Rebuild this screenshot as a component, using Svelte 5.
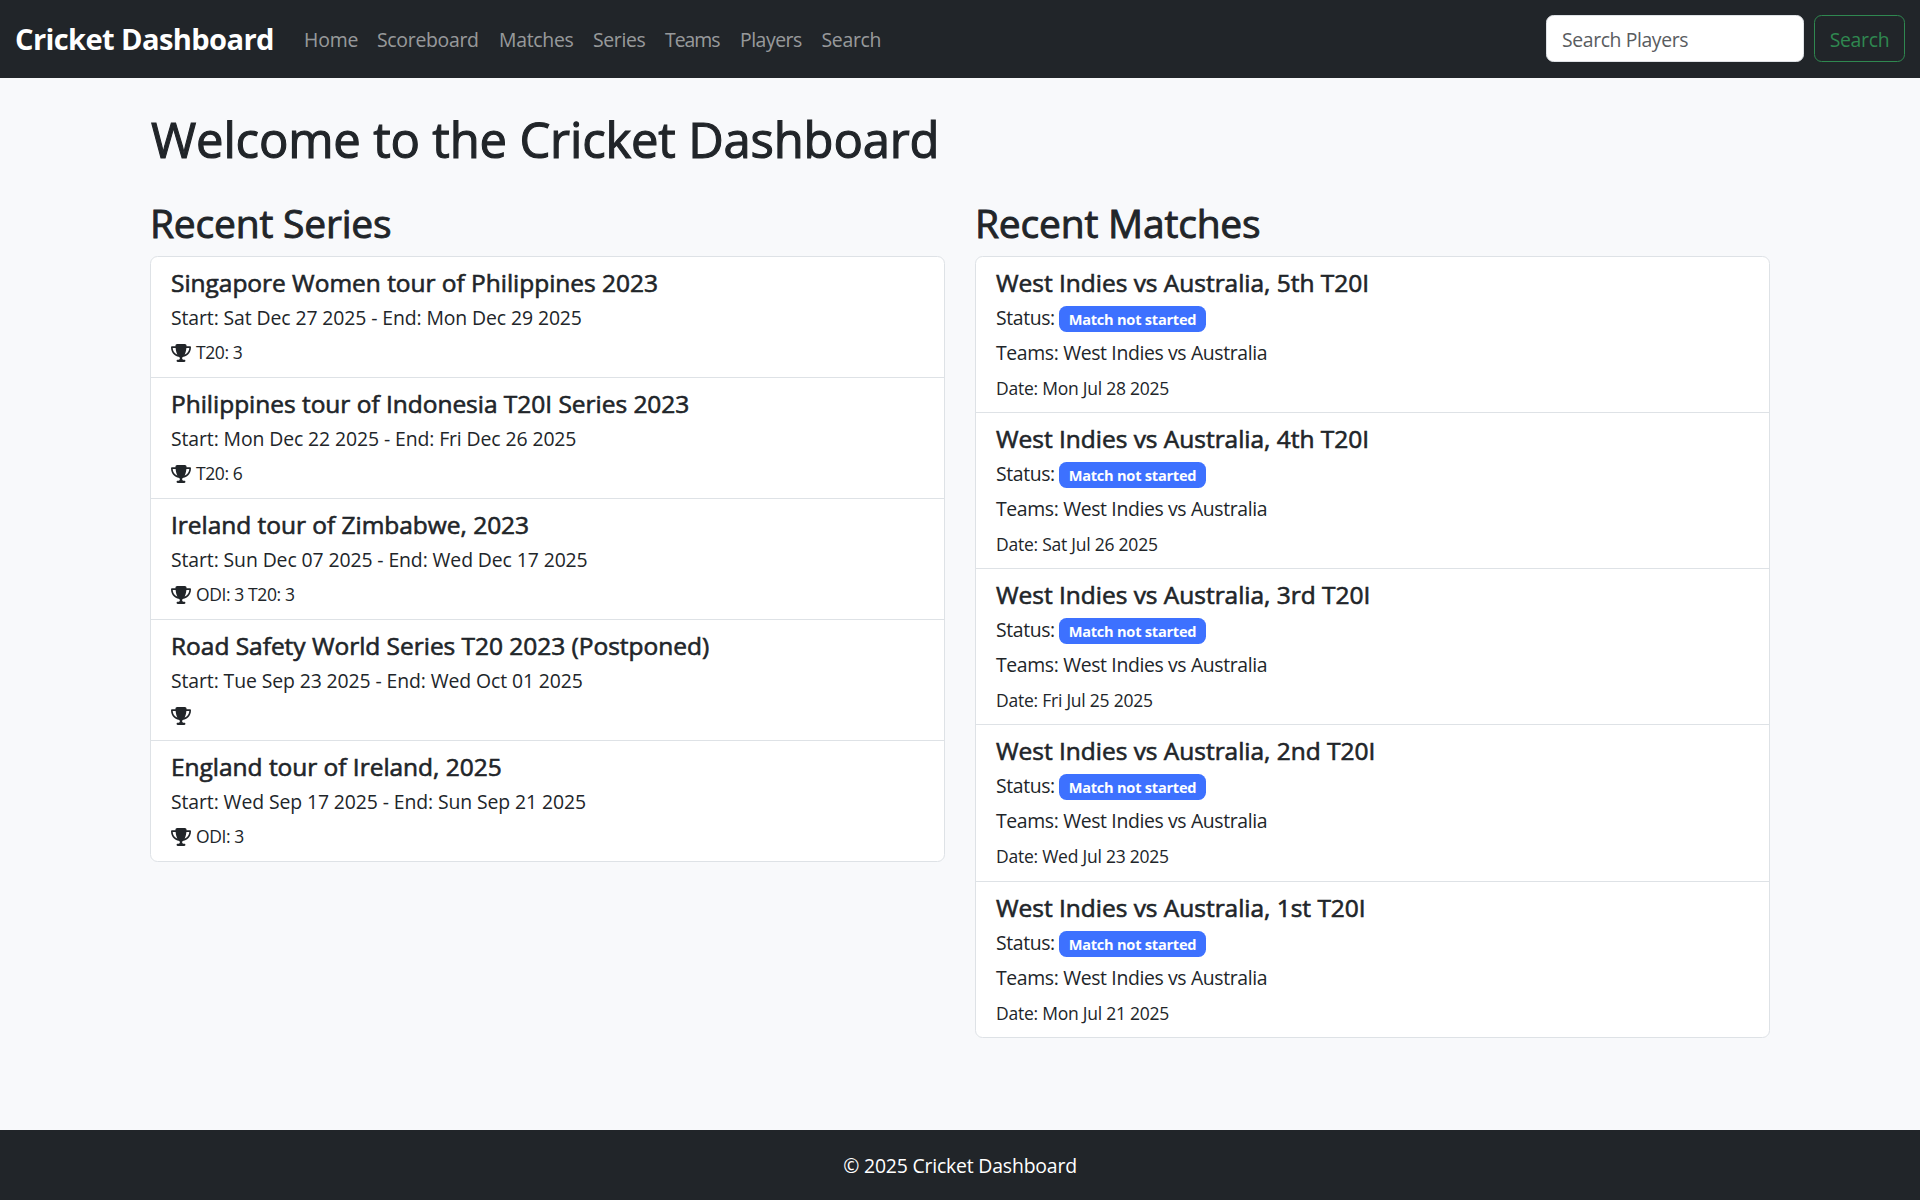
<script>
  const navLinks = ['Home', 'Scoreboard', 'Matches', 'Series', 'Teams', 'Players', 'Search'];

  const series = [
    { name: 'Singapore Women tour of Philippines 2023', start: 'Sat Dec 27 2025', end: 'Mon Dec 29 2025', formats: 'T20: 3' },
    { name: 'Philippines tour of Indonesia T20I Series 2023', start: 'Mon Dec 22 2025', end: 'Fri Dec 26 2025', formats: 'T20: 6' },
    { name: 'Ireland tour of Zimbabwe, 2023', start: 'Sun Dec 07 2025', end: 'Wed Dec 17 2025', formats: 'ODI: 3 T20: 3' },
    { name: 'Road Safety World Series T20 2023 (Postponed)', start: 'Tue Sep 23 2025', end: 'Wed Oct 01 2025', formats: '' },
    { name: 'England tour of Ireland, 2025', start: 'Wed Sep 17 2025', end: 'Sun Sep 21 2025', formats: 'ODI: 3' }
  ];

  const matches = [
    { name: 'West Indies vs Australia, 5th T20I', date: 'Mon Jul 28 2025' },
    { name: 'West Indies vs Australia, 4th T20I', date: 'Sat Jul 26 2025' },
    { name: 'West Indies vs Australia, 3rd T20I', date: 'Fri Jul 25 2025' },
    { name: 'West Indies vs Australia, 2nd T20I', date: 'Wed Jul 23 2025' },
    { name: 'West Indies vs Australia, 1st T20I', date: 'Mon Jul 21 2025' }
  ];
</script>

<div class="page">
  <nav class="navbar">
    <a class="brand" href="#home">Cricket Dashboard</a>
    <ul class="links">
      {#each navLinks as link}
        <li><a class={link.toLowerCase()} href="#{link.toLowerCase()}">{link}</a></li>
      {/each}
    </ul>
    <form class="search-form">
      <input type="search" placeholder="Search Players" aria-label="Search Players" />
      <button type="button">Search</button>
    </form>
  </nav>

  <main class="container">
    <h1>Welcome to the Cricket Dashboard</h1>
    <div class="row">
      <section>
        <h2>Recent Series</h2>
        <ul class="list">
          {#each series as item}
            <li>
              <h5>{item.name}</h5>
              <p class="dates">Start: {item.start} - End: {item.end}</p>
              <small class="formats">
                <svg viewBox="0 0 576 512" aria-hidden="true"><path d="M400 0H176c-26.5 0-48.1 21.8-47.1 48.2c.2 5.3 .4 10.6 .7 15.8H24C10.7 64 0 74.7 0 88c0 92.6 33.5 157 78.5 200.7c44.3 43.1 98.3 64.8 138.1 75.8c23.4 6.5 39.4 26 39.4 45.6c0 20.9-17 37.9-37.9 37.9H192c-17.7 0-32 14.3-32 32s14.3 32 32 32H384c17.7 0 32-14.3 32-32s-14.3-32-32-32H357.9C337 448 320 431 320 410.1c0-19.6 15.9-39.2 39.4-45.6c39.9-11 93.9-32.7 138.2-75.8C542.5 245 576 180.6 576 88c0-13.3-10.7-24-24-24H446.4c.3-5.2 .5-10.4 .7-15.8C448.1 21.8 426.5 0 400 0zM48.9 112h84.4c9.1 90.1 29.2 150.3 51.9 190.6c-24.9-11-50.8-26.5-73.2-48.3c-32-31.1-58-76-63-142.3zM464.1 254.3c-22.4 21.8-48.3 37.3-73.2 48.3c22.7-40.3 42.8-100.5 51.9-190.6h84.4c-5.1 66.3-31.1 111.2-63 142.3z" /></svg>
                <span>{item.formats}</span>
              </small>
            </li>
          {/each}
        </ul>
      </section>
      <section>
        <h2>Recent Matches</h2>
        <ul class="list matches">
          {#each matches as match}
            <li>
              <h5>{match.name}</h5>
              <p class="status"><span class="label">Status:</span> <span class="badge">Match not started</span></p>
              <p class="teams">Teams: West Indies vs Australia</p>
              <small>Date: {match.date}</small>
            </li>
          {/each}
        </ul>
      </section>
    </div>
  </main>

  <footer>© 2025 Cricket Dashboard</footer>
</div>

<style>
  :global(body) { margin: 0; }
  .page {
    display: flex;
    flex-direction: column;
    height: 1200px;
    overflow: hidden;
    background: #f8f9fb;
    color: #212529;
    font: 400 19.4px/30px "Open Sans", "Noto Sans", sans-serif;
  }
  .page, .page * { box-sizing: border-box; }
  ul { list-style: none; margin: 0; padding: 0; }
  a { text-decoration: none; }

  .navbar {
    display: flex;
    align-items: center;
    flex: none;
    height: 78px;
    padding: 0 15px;
    background: #212529;
  }
  .brand {
    width: 279px;
    color: #fff;
    font-size: 29.1px;
    line-height: 46px;
    font-weight: 700;
    letter-spacing: -0.62px;
    white-space: nowrap;
  }
  .links { display: flex; flex: 1; }
  .links li { padding: 1px 10px 0; }
  .links a { display: block; color: rgba(255, 255, 255, 0.55); letter-spacing: -0.28px; }
  .links .home { width: 53px; letter-spacing: -0.14px; }
  .links .scoreboard { width: 102px; }
  .links .matches { width: 74px; }
  .links .series { width: 52px; letter-spacing: -0.35px; }
  .links .teams { width: 55px; letter-spacing: -1px; }
  .links .players { width: 61.5px; letter-spacing: -0.48px; }

  .search-form { display: flex; gap: 10px; padding-bottom: 1px; }
  input, button {
    height: 47px;
    font: inherit;
    border-radius: 7.5px;
  }
  input {
    width: 258px;
    padding: 2px 15px 0;
    border: 1px solid #dee2e6;
    background: #fff;
    letter-spacing: -0.39px;
    appearance: none;
  }
  input::placeholder { color: #595c5f; opacity: 1; }
  button {
    width: 91px;
    padding: 2px 0 0;
    border: 1px solid #2f8850;
    background: transparent;
    color: #2f8850;
    letter-spacing: -0.3px;
  }

  .container {
    flex: 1;
    width: 1650px;
    margin: 0 auto;
    padding: 31px 15px 0;
  }
  h1, h2, h5 { margin: 0; font-weight: 500; -webkit-text-stroke: 0.6px currentColor; white-space: nowrap; }
  h1 { padding-left: 1px; font-size: 49px; line-height: 60px; letter-spacing: -0.18px; -webkit-text-stroke-width: 1.1px; }
  h2 { height: 48px; margin-bottom: 10px; padding-top: 1px; font-size: 39px; line-height: 48px; letter-spacing: -0.2px; -webkit-text-stroke-width: 0.9px; }
  h5 { font-size: 24.5px; line-height: 31px; height: 30px; letter-spacing: -0.03px; margin-bottom: 5px; }
  .row { display: grid; grid-template-columns: 1fr 1fr; gap: 30px; padding-top: 29px; }

  .list {
    border: 1px solid #dee2e6;
    border-radius: 7.5px;
    background: #fff;
    overflow: hidden;
  }
  .list li {
    height: 121px;
    padding: 10px 20px;
    border-bottom: 1px solid #dee2e6;
  }
  .list li:last-child { border-bottom: 0; height: 120px; }
  .matches.list li { height: 156.15px; }
  .matches.list li:last-child { height: 155.6px; }
  p { height: 30px; margin: 0 0 5px; line-height: 31px; white-space: nowrap; }
  .dates { letter-spacing: -0.1px; }
  small { display: block; height: 30px; font-size: 17.5px; line-height: 32px; letter-spacing: -0.24px; white-space: nowrap; }
  .formats { display: flex; align-items: center; gap: 5px; letter-spacing: -0.4px; }
  .formats svg { display: block; width: 20px; height: 18px; margin-top: 1px; fill: currentColor; }

  .status { display: flex; }
  .label { width: 63px; letter-spacing: -0.39px; }
  .badge {
    width: 147px;
    height: 26px;
    margin-top: 4px;
    border-radius: 7.5px;
    background: #3d71ff;
    color: #fff;
    font-size: 14.6px;
    font-weight: 700;
    line-height: 26px;
    letter-spacing: -0.24px;
    text-align: center;
  }
  .teams { letter-spacing: -0.36px; }

  footer {
    flex: none;
    height: 70px;
    padding: 21px 0 19px;
    background: #212529;
    color: #fff;
    text-align: center;
    letter-spacing: -0.18px;
  }
</style>
